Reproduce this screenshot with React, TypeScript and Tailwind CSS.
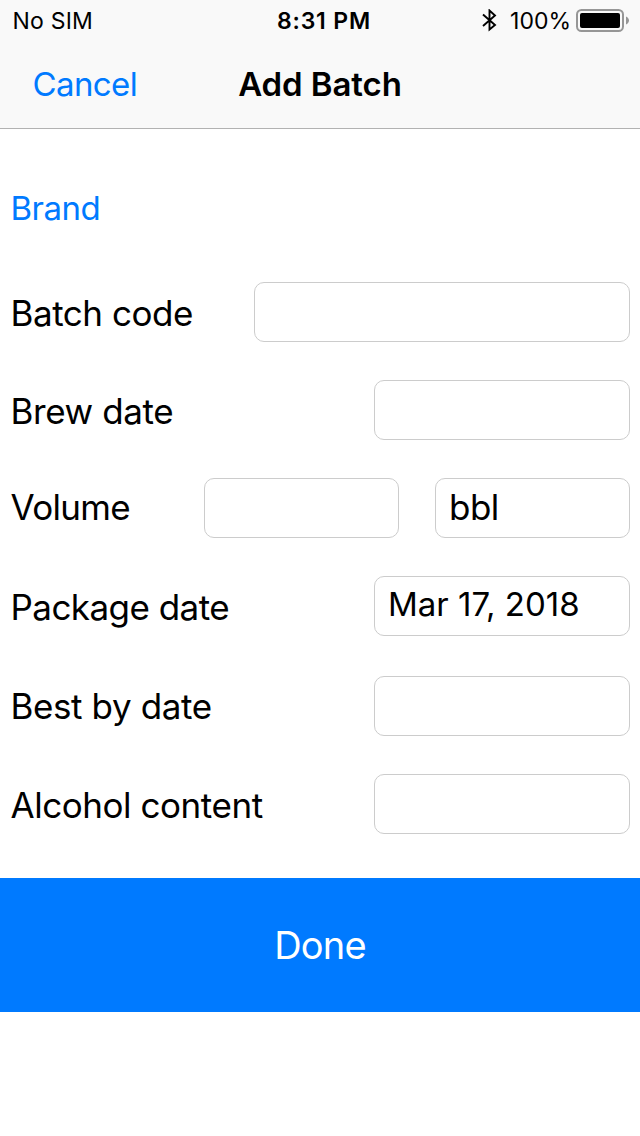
import type { ReactNode } from "react";

function Field({ className, children }: { className: string; children?: ReactNode }) {
  return (
    <div className={"flex h-[60px] shrink-0 items-center whitespace-nowrap rounded-[10px] border border-[#cccccc] bg-white " + className}>
      {children}
    </div>
  );
}

function Row({ label, labelClass, children }: { label: string; labelClass: string; children: ReactNode }) {
  return (
    <div className="flex h-[60px] shrink-0 items-center justify-between">
      <span className={"whitespace-nowrap pl-[0.5px] text-[35px] leading-10 " + labelClass}>{label}</span>
      {children}
    </div>
  );
}

function BluetoothIcon() {
  return (
    <svg className="mr-[13px] h-6 w-4" viewBox="0 0 16 24" fill="none" stroke="black" strokeWidth="1.9">
      <path d="M2 5.5L14 16L8.5 20.5V1.5L14 6.5L2 17" />
    </svg>
  );
}

function BatteryIcon() {
  return (
    <svg className="ml-[5px] h-6 w-[53px]" viewBox="0 0 53 24">
      <rect x="1" y="1" width="46" height="21" rx="4.5" fill="none" stroke="#969696" strokeWidth="2" />
      <rect x="4" y="4" width="40" height="15" rx="2" />
      <path d="M50 7.5C52 8.5 53 10 53 11.5S52 14.5 50 15.5Z" fill="#969696" />
    </svg>
  );
}

export default function App() {
  return (
    <div className="flex h-[1136px] w-[640px] flex-col overflow-hidden bg-white font-['Inter',sans-serif] text-black">
      <header className="h-[129px] shrink-0 border-b border-[#b2b2b2] bg-[#f9f9f9]">
        <div className="grid h-10 grid-cols-3 items-center pl-3 pr-[11px] pt-0.5 text-[23px] leading-8">
          <span className="pl-[0.5px] tracking-[0.2px]">No SIM</span>
          <span className="pl-[7px] text-center font-semibold tracking-[0.85px]">8:31 PM</span>
          <div className="flex items-center justify-end">
            <BluetoothIcon />
            <span>100%</span>
            <BatteryIcon />
          </div>
        </div>
        <div className="grid h-22 grid-cols-3 items-center px-8 text-[33px] leading-10">
          <span className="pl-[0.5px] tracking-[-0.6px] text-[#007aff]">Cancel</span>
          <span className="whitespace-nowrap text-center font-semibold tracking-[-0.1px]">Add Batch</span>
        </div>
      </header>
      <main className="flex flex-col px-2.5 pt-[59px]">
        <span className="mb-[54px] pl-[0.5px] text-[33px] leading-10 tracking-[-0.5px] text-[#007aff]">Brand</span>
        <div className="flex flex-col gap-[38px]">
          <Row label="Batch code" labelClass="pt-px tracking-[-0.45px]"><Field className="w-[376px]" /></Row>
          <Row label="Brew date" labelClass="pt-px tracking-[-0.4px]"><Field className="w-64" /></Row>
          <Row label="Volume" labelClass="pb-[3px] tracking-[-0.7px]">
            <div className="flex gap-9">
              <Field className="w-[195px]" />
              <Field className="w-[195px] pb-px pl-[13px] text-[35px] tracking-[-0.5px]">bbl</Field>
            </div>
          </Row>
          <Row label="Package date" labelClass="pt-px tracking-[-0.55px]">
            <Field className="w-64 pb-[3px] pl-[13px] text-[33px]">Mar 17, 2018</Field>
          </Row>
        </div>
        <div className="mb-[44px] mt-10 flex flex-col gap-[38px]">
          <Row label="Best by date" labelClass="pb-px tracking-[-0.4px]"><Field className="w-64" /></Row>
          <Row label="Alcohol content" labelClass="pt-px tracking-[-0.45px]"><Field className="w-64" /></Row>
        </div>
      </main>
      <button className="h-[134px] shrink-0 bg-[#007aff] text-[38px] tracking-[-0.8px] text-white">Done</button>
    </div>
  );
}
